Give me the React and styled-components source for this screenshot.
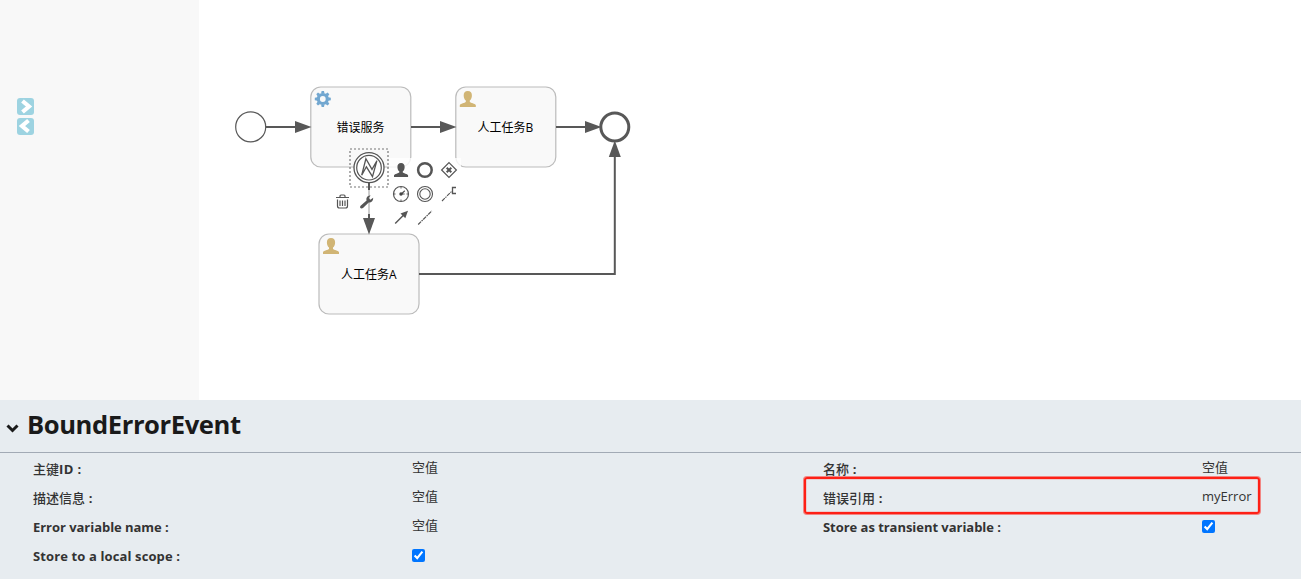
import React from "react";
import styled, { createGlobalStyle } from "styled-components";

const GlobalStyle = createGlobalStyle`
  * { box-sizing: border-box; }
  body { margin: 0; background: #fff; overflow: hidden; }
`;

const Page = styled.div`
  width: 100%;
  height: 579px;
  display: flex;
  flex-direction: column;
  font-family: "Open Sans", "Noto Sans CJK SC", sans-serif;
  color: #333;
`;
const Editor = styled.main`
  height: 400px;
  display: flex;
`;
const Palette = styled.aside`
  width: 199px;
  background: #f8f8f8;
  padding: 98px 0 0 17px;
  display: flex;
  flex-direction: column;
  gap: 3px;
`;
const PaletteButton = styled.button`
  width: 17px;
  height: 17px;
  padding: 0;
  border: 0;
  border-radius: 3px;
  background: #9dd3e1;
  svg { display: block; }
`;
const Canvas = styled.svg`
  flex: 1;
  height: 400px;
  display: block;
`;
const NodeLabel = styled.text`
  font: 12px "Open Sans", "Noto Sans CJK SC", sans-serif;
  fill: #000;
  text-anchor: middle;
`;
const Panel = styled.section`
  flex: 1;
  background: #e7ecf0;
`;
const PanelHeader = styled.header`
  height: 53px;
  border-bottom: 1px solid #a2aab5;
  display: flex;
  align-items: center;
  padding: 0 0 0 6px;
  gap: 8px;
  svg { display: block; margin-top: 5px; }
`;
const Title = styled.h1`
  margin: 0;
  font-size: 25.6px;
  line-height: 50px;
  padding-bottom: 2px;
  font-weight: 700;
  letter-spacing: -0.42px;
  color: #1a1a1a;
`;
const Properties = styled.div`
  display: grid;
  grid-template-columns: 790px 1fr;
  padding: 1px 0 0 33px;
`;
const Property = styled.div`
  height: 29px;
  display: grid;
  grid-template-columns: 379px 1fr;
`;
const Label = styled.label`
  font-size: 13px;
  line-height: 31px;
  font-weight: 700;
  letter-spacing: ${(p) => p.$tracking || 0}px;
  white-space: pre;
  span { font-weight: 500; letter-spacing: 0; }
`;
const Value = styled.span`
  font-size: 13px;
  line-height: 26px;
  color: #333;
  white-space: nowrap;
`;
const Check = styled.input`
  width: 13px;
  height: 13px;
  margin: 8px 0 0 0;
  accent-color: #0075ff;
`;
const Highlight = styled.div`
  position: absolute;
  left: 804px;
  top: 477px;
  width: 456px;
  height: 37px;
  border: 2px solid #fe2016;
  border-radius: 3px;
  box-shadow: 0 0 0 1px rgba(254, 32, 22, 0.5), inset 0 0 0 0.5px rgba(254, 32, 22, 0.3);
  pointer-events: none;
`;

function Task({ x, y, label, kind }) {
  return (
    <g transform={`translate(${x} ${y})`}>
      <rect width="100" height="80" rx="10" fill="#f9f9f9" stroke="#bbb" strokeWidth="1.2" />
      {kind === "user" ? (
        <path transform="translate(4 4)" fill="#d1b575" d={USER} />
      ) : (
        <g transform="translate(12 12)">
          <circle r="4.5" fill="none" stroke="#72a7d0" strokeWidth="3.2" />
          {[0, 45, 90, 135, 180, 225, 270, 315].map((a) => (
            <path key={a} d="M-1.7-5.4-1.2-8h2.4l.5 2.6z" fill="#72a7d0" transform={`rotate(${a})`} />
          ))}
        </g>
      )}
      <NodeLabel x="49.700" y="45">{label}</NodeLabel>
    </g>
  );
}
const USER = "M8 0c2.8 0 4.3 1.9 4.1 4.7-.1 2.1-.8 3.7-2.1 4.8v1.400c1 .9 5.100 1.500 6 3.100V16H0v-2c.9-1.600 5-2.200 6-3.100V9.500C4.700 8.400 4 6.800 3.900 4.700 3.700 1.900 5.200 0 8 0z";

function Flow({ d, tip, angle = 0 }) {
  return (
    <g>
      <path d={d} fill="none" stroke="#585858" strokeWidth="2" />
      <path d="M0 0-16.500-6V6z" fill="#585858" transform={`translate(${tip[0]} ${tip[1]}) rotate(${angle})`} />
    </g>
  );
}

function Diagram() {
  return (
    <Canvas viewBox="199 0 1102 400">
      <circle cx="250.700" cy="126.900" r="15" fill="#fff" stroke="#585858" strokeWidth="1.200" />
      <Task x={310.800} y={87} label="错误服务" kind="service" />
      <Task x={455.800} y={87} label="人工任务B" kind="user" />
      <Task x={319} y={234} label="人工任务A" kind="user" />
      <circle cx="614.800" cy="127" r="14" fill="#fff" stroke="#585858" strokeWidth="3" />
      <Flow d="M266 127H300" tip={[311.500, 127]} />
      <Flow d="M411 127H445" tip={[456.500, 127]} />
      <Flow d="M556 127H590" tip={[601.500, 127]} />
      <Flow d="M369 182V222" tip={[369, 234.500]} angle={90} />
      <Flow d="M419 274H614.800V152" tip={[614.800, 140.500]} angle={-90} />
      <rect x="389" y="158" width="72" height="72" fill="#fff" opacity=".8" />
      <rect x="357" y="190" width="24" height="24" fill="#fff" opacity=".7" />

      <g fill="none" stroke="#555">
        <rect x="350" y="149" width="38" height="38" strokeDasharray="2 2" strokeWidth="1.200" stroke="#777" />
        <circle cx="369" cy="167.700" r="15" fill="#fff" strokeWidth="1.300" />
        <circle cx="369" cy="167.700" r="12.300" strokeWidth="1.200" />
        <path d="M361.700 175.200 365.900 158.800 372 169.400 376.900 160.700 372.500 176.700 366.400 166.800z" strokeWidth="1.300" />
      </g>

      <path transform="translate(394 163) scale(.88)" d={USER} fill="#555" />
      <g fill="none" stroke="#555">
        <circle cx="424.900" cy="170" r="6.800" strokeWidth="2.500" />
        <path d="m449 162.600 7.400 7.400-7.400 7.400-7.400-7.400z" strokeWidth="1.200" />
        <path d="m446.700 167.700 4.600 4.600m0-4.600-4.600 4.600" strokeWidth="2" />
        <circle cx="401" cy="194" r="7.500" strokeWidth="1.200" />
        <path d="M401 187v1.500m0 11v1.500m-7-7h1.500m11 0h1.500" strokeWidth="1" />
        <path d="m404.800 190.700-3.500 3.300h3.400" strokeWidth="1.200" />
        <circle cx="401" cy="194" r="1.700" fill="#444" stroke="none" />
        <circle cx="425" cy="194" r="7.500" strokeWidth="1.100" />
        <circle cx="425" cy="194" r="5.200" strokeWidth="1.100" />
        <path d="m442 201 9.500-9.500" strokeWidth="1.100" strokeDasharray="4 .8 1.500 .8" />
        <path d="M456 187.500h-3.500v6h3.500" strokeWidth="1.300" />
        <path d="m395.200 223.500 9-9" strokeWidth="1.400" />
        <path d="m408 210.800-2.700 7.400-4.800-4.800z" fill="#555" stroke="none" />
        <path d="m418.200 224.500 13.600-13.600" strokeWidth="1.200" strokeDasharray="4 .8 1.500 .8" />
        <path d="M336 197.500h13m-9 0v-1.500q0-1 1-1h3q1 0 1 1v1.500m-7.500 2V206q0 2 2 2h6q2 0 2-2v-6.500m-7.500 1v5.500m2.500-5.500v5.500m2.500-5.500v5.500" strokeWidth="1.200" />
      </g>
      <path
        d="M360.600 205.700 366.600 200.500C365.900 197.800 367.400 195.600 370.600 195.600L368.700 198 370.300 199.800 373.200 197.700C373.400 201.100 371.200 202.800 368.700 202.500L363 208C361.200 209.400 359 207.500 360.600 205.700z"
        fill="#555"
      />
    </Canvas>
  );
}

const FIELDS = [
  { cjk: "主键", label: "ID :", value: "空值", tracking: 0.4 },
  { cjk: "名称", label: " :", value: "空值", tracking: 0.4 },
  { cjk: "描述信息", label: " :", value: "空值", tracking: 0.4 },
  { cjk: "错误引用", label: " :", value: "myError", tracking: 0.4 },
  { label: "Error variable name :", value: "空值", tracking: -0.04 },
  { label: "Store as transient variable :", checked: true, tracking: -0.04 },
  { label: "Store to a local scope :", checked: true, tracking: 0.12 },
];

export default function App() {
  return (
    <Page>
      <GlobalStyle />
      <Editor>
        <Palette>
          <PaletteButton aria-label="展开">
            <svg width="17" height="17"><path d="m5.500 3 6.500 5.500L5.500 14" fill="none" stroke="#fff" strokeWidth="4.200" /></svg>
          </PaletteButton>
          <PaletteButton aria-label="收起">
            <svg width="17" height="17"><path d="M11.500 2.500 5 8l6.500 5.500" fill="none" stroke="#fff" strokeWidth="4.200" /></svg>
          </PaletteButton>
        </Palette>
        <Diagram />
      </Editor>
      <Panel>
        <PanelHeader>
          <svg width="13" height="9"><path d="m1.500 1.500 5 5 5-5" fill="none" stroke="#1a1a1a" strokeWidth="3" /></svg>
          <Title>BoundErrorEvent</Title>
        </PanelHeader>
        <Properties>
          {FIELDS.map((f) => (
            <Property key={(f.cjk || "") + f.label}>
              <Label $tracking={f.tracking}>{f.cjk && <span>{f.cjk}</span>}{f.label}</Label>
              {f.checked ? <Check type="checkbox" defaultChecked /> : <Value>{f.value}</Value>}
            </Property>
          ))}
        </Properties>
      </Panel>
      <Highlight />
    </Page>
  );
}
